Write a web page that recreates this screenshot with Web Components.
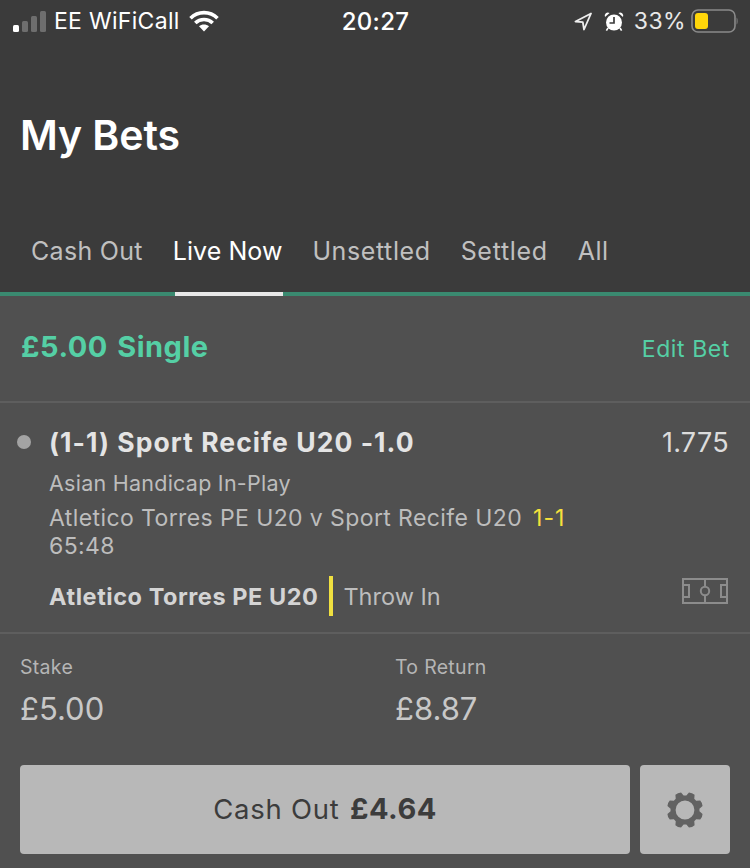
<!DOCTYPE html>
<html>
<head>
<meta charset="utf-8">
<style>
  html, body { margin: 0; padding: 0; background: #505050; }
  body { width: 750px; height: 868px; overflow: hidden; font-family: Inter, "Liberation Sans", sans-serif; }
</style>
</head>
<body>
<my-bets-page></my-bets-page>
<script>
class StatusBar extends HTMLElement {
  connectedCallback() {
    this.attachShadow({ mode: 'open' });
    this.shadowRoot.innerHTML = `
      <style>
        :host { display: flex; align-items: center; justify-content: space-between; height: 42px; padding: 0 12px 0 13px; color: #fff; font-size: 23px; }
        .side { display: flex; align-items: center; flex: 1; }
        .right { justify-content: flex-end; }
        .time { font-weight: 500; font-size: 24px; letter-spacing: .3px; }
        .carrier { margin: 0 9px 0 8px; letter-spacing: .3px; }
        .pct { margin: 0 5px 0 10px; color: #e8e8e8; letter-spacing: .4px; }
        svg { display: block; }
      </style>
      <div class="side">
        <svg width="33" height="22" viewBox="0 0 33 22">
          <rect x="0" y="15" width="6" height="7" rx="1.5" fill="#fff"/>
          <rect x="9" y="11" width="6" height="11" rx="1.5" fill="#6e6e6e"/>
          <rect x="18" y="6" width="6" height="16" rx="1.5" fill="#6e6e6e"/>
          <rect x="27" y="1" width="6" height="21" rx="1.5" fill="#6e6e6e"/>
        </svg>
        <span class="carrier">EE WiFiCall</span>
        <svg width="30" height="22" viewBox="0 0 30 22" fill="none" stroke="#fff" stroke-width="3.6">
          <path d="M1.5 8.2C9 .8 21 .8 28.5 8.2"/>
          <path d="M6.3 13C11 8.4 19 8.4 23.7 13"/>
          <path d="M15 21.5l-5-5.2c2.8-2.4 7.2-2.4 10 0z" fill="#fff" stroke="none"/>
        </svg>
      </div>
      <div class="time">20:27</div>
      <div class="side right">
        <svg width="18" height="19" viewBox="0 0 18 19" fill="none" stroke="#eee" stroke-width="1.8" stroke-linejoin="round">
          <path d="M17 1.5L1.5 9.5l7.3.6 1.2 7.4z"/>
        </svg>
        <svg style="margin-left:12px" width="20" height="21" viewBox="0 0 20 21">
          <path d="M1 6a3.2 3.2 0 0 1 4.6-4zM19 6a3.2 3.2 0 0 0-4.6-4z" fill="#fff"/>
          <path d="M4 17l-1.6 2.6M16 17l1.6 2.6" stroke="#fff" stroke-width="1.6"/>
          <circle cx="10" cy="11.5" r="8" fill="#fff"/>
          <path d="M10 6v6H5.5" fill="none" stroke="#3b3b3b" stroke-width="1.7"/>
        </svg>
        <span class="pct">33%</span>
        <svg width="47" height="24" viewBox="0 0 47 24">
          <rect x="1" y="1" width="43" height="22" rx="6" fill="none" stroke="#8a8a8a" stroke-width="1.6"/>
          <rect x="4" y="4" width="13" height="16" rx="3" fill="#ffd60a"/>
          <path d="M45.6 8.5c1.2.4 1.4 6.6 0 7z" fill="#8a8a8a"/>
        </svg>
      </div>
    `;
  }
}
customElements.define('status-bar', StatusBar);

class BetTabs extends HTMLElement {
  connectedCallback() {
    this.attachShadow({ mode: 'open' });
    // tracking per label, the reference font sets these a little differently
    const tabs = [['Cash Out', .3], ['Live Now', .05], ['Unsettled', .6], ['Settled', .7], ['All', .4]];
    this.shadowRoot.innerHTML = `
      <style>
        :host { display: flex; gap: 30px; padding-left: 31px; border-bottom: 4px solid #3a8a70; height: 77px; font-size: 25px; color: #c0c0c0; }
        .tab { position: relative; padding-top: 21px; line-height: 30px; white-space: nowrap; }
        .on { color: #fff; }
        .on::after { content: ''; position: absolute; left: 2px; right: -1px; bottom: -4px; height: 4px; background: #e8e8e8; }
      </style>
      ${tabs.map(([t, ls]) => `<div class="tab${t === 'Live Now' ? ' on' : ''}" style="letter-spacing:${ls}px">${t}</div>`).join('')}
    `;
  }
}
customElements.define('bet-tabs', BetTabs);

class BetSummary extends HTMLElement {
  connectedCallback() {
    this.attachShadow({ mode: 'open' });
    this.shadowRoot.innerHTML = `
      <style>
        :host { display: flex; align-items: center; justify-content: space-between; box-sizing: border-box; height: 107px; padding: 0 20px 0 21px; border-bottom: 2px solid #5e5e5e; color: #55cfa5; }
        .title { font-size: 29px; font-weight: 700; margin-top: -5px; word-spacing: 2px; letter-spacing: .5px; }
        a { font-size: 23px; letter-spacing: .6px; }
      </style>
      <div class="title"><slot name="title"></slot></div>
      <a><slot name="action"></slot></a>
    `;
  }
}
customElements.define('bet-summary', BetSummary);

class BetSelection extends HTMLElement {
  connectedCallback() {
    this.attachShadow({ mode: 'open' });
    this.shadowRoot.innerHTML = `
      <style>
        :host { display: block; position: relative; box-sizing: border-box; height: 231px; padding: 21px 21px 0 49px; border-bottom: 2px solid #5e5e5e; color: #bdbdbd; }
        .dot { position: absolute; left: 17px; top: 32px; width: 14px; height: 14px; border-radius: 50%; background: #a3a3a3; }
        .top { display: flex; justify-content: space-between; align-items: baseline; }
        .name { font-size: 26.5px; font-weight: 700; color: #e4e4e4; line-height: 36px; letter-spacing: 1.05px; }
        .odds { font-size: 27px; color: #dcdcdc; letter-spacing: .3px; }
        .sub { font-size: 23px; line-height: 28px; letter-spacing: .4px; }
        .market { margin-top: 9px; font-size: 21.5px; letter-spacing: .25px; }
        .event { margin-top: 7px; white-space: nowrap; }
        .score { color: #f5e13c; margin-left: 11px; letter-spacing: 1px; }
        .live { display: flex; align-items: center; margin-top: 16px; height: 40px; }
        .team { font-size: 23.5px; font-weight: 700; color: #d4d4d4; letter-spacing: .55px; }
        .bar { width: 4px; height: 40px; background: #f0e040; margin: 0 10px 0 11px; }
        .state { font-size: 23.5px; }
        svg { position: absolute; right: 22px; top: 175px; }
      </style>
      <div class="dot"></div>
      <div class="top"><div class="name">(1-1) Sport Recife U20 -1.0</div><div class="odds">1.775</div></div>
      <div class="sub market">Asian Handicap In-Play</div>
      <div class="sub event">Atletico Torres PE U20 v Sport Recife U20<span class="score">1-1</span></div>
      <div class="sub">65:48</div>
      <div class="live"><span class="team">Atletico Torres PE U20</span><span class="bar"></span><span class="state">Throw In</span></div>
      <svg width="46" height="26" viewBox="0 0 46 26" fill="none" stroke="#8c8c8c" stroke-width="2">
        <rect x="1" y="1" width="44" height="24"/>
        <path d="M23 1v7M23 18v7M1 7h6v12H1M45 7h-6v12h6"/>
        <circle cx="23" cy="13" r="4.2"/>
      </svg>
    `;
  }
}
customElements.define('bet-selection', BetSelection);

class BetAmounts extends HTMLElement {
  connectedCallback() {
    this.attachShadow({ mode: 'open' });
    this.shadowRoot.innerHTML = `
      <style>
        :host { display: grid; grid-template-columns: 375px 1fr; height: 131px; padding: 21px 0 0 20px; box-sizing: border-box; color: #b5b5b5; }
        .label { font-size: 19.5px; line-height: 24px; letter-spacing: .3px; }
        .value { font-size: 31px; line-height: 40px; margin-top: 10px; color: #c8c8c8; }
      </style>
      <div><div class="label">Stake</div><div class="value">£5.00</div></div>
      <div><div class="label">To Return</div><div class="value">£8.87</div></div>
    `;
  }
}
customElements.define('bet-amounts', BetAmounts);

class CashOutBar extends HTMLElement {
  connectedCallback() {
    this.attachShadow({ mode: 'open' });
    this.shadowRoot.innerHTML = `
      <style>
        :host { display: flex; gap: 10px; padding: 0 20px; }
        .btn { display: flex; align-items: center; justify-content: center; box-sizing: border-box; height: 89px; background: #b8b8b8; border-radius: 4px; color: #3c3c3c; }
        .cash { flex: 1; font-size: 27.5px; letter-spacing: .75px; white-space: pre; padding-bottom: 2px; }
        .cash b { margin-left: 2px; font-size: 29px; font-weight: 700; letter-spacing: .5px; }
        .gear { width: 90px; }
      </style>
      <div class="btn cash">Cash Out <b>£4.64</b></div>
      <div class="btn gear">
        <svg width="38" height="38" viewBox="-19 -19 38 38">
          <path fill="#626262" fill-rule="evenodd" d="${gearPath()} M9.4 0A9.4 9.4 0 1 0-9.4 0 9.4 9.4 0 1 0 9.4 0z"/>
        </svg>
      </div>
    `;
  }
}
// eight rounded teeth around a ring
function gearPath() {
  let d = '';
  const teeth = 8;
  for (let i = 0; i < teeth; i++) {
    const a = (i + 0.5) * Math.PI * 2 / teeth - Math.PI / 2;
    const pt = (r, o) => `${(r * Math.cos(a + o)).toFixed(2)} ${(r * Math.sin(a + o)).toFixed(2)}`;
    d += `${i ? 'L' : 'M'}${pt(14.5, -0.30)}L${pt(18, -0.17)}Q${pt(18.9, 0)} ${pt(18, 0.17)}L${pt(14.5, 0.30)}`;
  }
  return d + 'z';
}
customElements.define('cash-out-bar', CashOutBar);

class MyBetsPage extends HTMLElement {
  connectedCallback() {
    this.attachShadow({ mode: 'open' });
    this.shadowRoot.innerHTML = `
      <style>
        :host { display: block; }
        header { background: #3b3b3b; }
        h1 { margin: 0; padding: 69px 0 0 20px; height: 104px; font-size: 41px; line-height: 48px; font-weight: 600; color: #fff; letter-spacing: -.1px; }
      </style>
      <header>
        <status-bar></status-bar>
        <h1>My Bets</h1>
        <bet-tabs></bet-tabs>
      </header>
      <bet-summary>
        <span slot="title">£5.00 Single</span>
        <span slot="action">Edit Bet</span>
      </bet-summary>
      <bet-selection></bet-selection>
      <bet-amounts></bet-amounts>
      <cash-out-bar></cash-out-bar>
    `;
  }
}
customElements.define('my-bets-page', MyBetsPage);
</script>
</body>
</html>
